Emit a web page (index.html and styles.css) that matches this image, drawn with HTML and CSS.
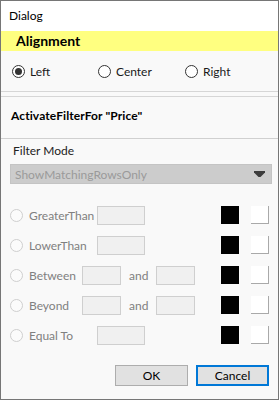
FILE: index.html
```html
<!DOCTYPE html>
<html lang="en">
<head>
    <meta charset="UTF-8">
    <title>Dialog</title>
    <link rel="stylesheet" href="styles.css">
</head>
<body>
    <div class="dialog">
        <div class="titlebar">Dialog</div>

        <div class="group-header">Alignment</div>
        <div class="align-row">
            <label class="align-opt opt-left"><span class="radio checked"></span>Left</label>
            <label class="align-opt opt-center"><span class="radio"></span>Center</label>
            <label class="align-opt"><span class="radio"></span>Right</label>
        </div>
        <div class="double-sep"></div>

        <div class="section-title">ActivateFilterFor "Price"</div>

        <div class="filter-body">
            <div class="field-label">Filter Mode</div>
            <div class="select">
                <span>ShowMatchingRowsOnly</span>
                <svg class="arrow" width="11" height="6" viewBox="0 0 11 6">
                    <path d="M0 0H11V1.5L6.5 6H4.5L0 1.5Z" fill="#3c3c3c"/>
                </svg>
            </div>

            <div class="rows">
                <div class="row">
                    <span class="radio off"></span>
                    <span class="row-label wide">GreaterThan</span>
                    <span class="box long"></span>
                    <span class="swatch black"></span>
                    <span class="swatch white"></span>
                </div>
                <div class="row">
                    <span class="radio off"></span>
                    <span class="row-label wide">LowerThan</span>
                    <span class="box long"></span>
                    <span class="swatch black"></span>
                    <span class="swatch white"></span>
                </div>
                <div class="row">
                    <span class="radio off"></span>
                    <span class="row-label">Between</span>
                    <span class="box"></span>
                    <span class="and">and</span>
                    <span class="box"></span>
                    <span class="swatch black"></span>
                    <span class="swatch white"></span>
                </div>
                <div class="row">
                    <span class="radio off"></span>
                    <span class="row-label">Beyond</span>
                    <span class="box"></span>
                    <span class="and">and</span>
                    <span class="box"></span>
                    <span class="swatch black"></span>
                    <span class="swatch white"></span>
                </div>
                <div class="row">
                    <span class="radio off"></span>
                    <span class="row-label wide">Equal To</span>
                    <span class="box long"></span>
                    <span class="swatch black"></span>
                    <span class="swatch white"></span>
                </div>
            </div>

            <div class="buttons">
                <button class="btn">OK</button>
                <button class="btn default">Cancel</button>
            </div>
        </div>
    </div>
</body>
</html>
```

FILE: styles.css
```css
body {
    margin: 0;
    font-family: Lato, "Liberation Sans", sans-serif;
    font-size: 12px;
    color: #000;
}
.dialog {
    width: 279px;
    height: 400px;
    box-sizing: border-box;
    border: 1px solid #767676;
    background-color: #f9f9f9;
    display: flex;
    flex-direction: column;
}
.titlebar {
    height: 30px;
    line-height: 29px;
    padding-left: 8px;
    background-color: white;
}
.group-header {
    height: 20px;
    line-height: 20px;
    padding-left: 15px;
    background-color: #ffff80;
    font-weight: bold;
    font-size: 14px;
}
.align-row {
    height: 40px;
    padding-left: 11px;
    display: flex;
    align-items: center;
}
.align-opt {
    display: flex;
    align-items: center;
    color: #1a1a1a;
}
.opt-left {
    width: 86px;
}
.opt-center {
    width: 87px;
}
.radio {
    width: 13px;
    height: 13px;
    box-sizing: border-box;
    border: 1px solid #333;
    border-radius: 50%;
    background: white;
    margin-right: 5px;
    position: relative;
    flex: none;
}
.radio.checked::after {
    content: "";
    position: absolute;
    left: 2px;
    top: 2px;
    width: 7px;
    height: 7px;
    border-radius: 50%;
    background: #333;
}
.radio.off {
    border-color: #cfcfcf;
    background: #fbfbfb;
}
.double-sep {
    height: 4px;
    border-top: 1px solid #d6d6d6;
    border-bottom: 1px solid #d6d6d6;
}
.section-title {
    height: 41px;
    line-height: 38px;
    padding-left: 10px;
    font-weight: bold;
    letter-spacing: 0.1px;
    border-bottom: 1px solid #d0d0d0;
}
.filter-body {
    flex: 1;
    padding: 0 9px 0 9px;
    display: flex;
    flex-direction: column;
}
.field-label {
    margin-top: 2px;
    height: 20px;
    line-height: 20px;
    padding-left: 3px;
    color: #222;
}
.select {
    margin-top: 3px;
    margin-right: -3px;
    height: 20px;
    box-sizing: border-box;
    border: 1px solid #c4c4c4;
    background-color: #cccccc;
    color: #9a9a9a;
    padding: 0 6px 0 4px;
    display: flex;
    align-items: center;
    justify-content: space-between;
}
.rows {
    margin-top: 16px;
}
.row {
    height: 30px;
    display: flex;
    align-items: center;
    color: #808080;
}
.row .radio {
    margin-right: 6px;
}
.row-label {
    width: 53px;
}
.row-label.wide {
    width: 68px;
}
.box {
    width: 39px;
    height: 19px;
    box-sizing: border-box;
    border: 1px solid #cfcfcf;
    background-color: #f0f0f0;
}
.box.long {
    width: 48px;
}
.and {
    width: 35px;
    padding-left: 8px;
    box-sizing: border-box;
}
.swatch {
    width: 18px;
    height: 18px;
    box-sizing: border-box;
}
.swatch.black {
    background: black;
    margin-left: auto;
}
.swatch.white {
    background: white;
    border-right: 1px solid #a9a9a9;
    border-bottom: 1px solid #a9a9a9;
    margin-left: 12px;
}
.buttons {
    margin-top: 15px;
    display: flex;
    justify-content: flex-end;
    gap: 8px;
}
.btn {
    width: 73px;
    height: 21px;
    box-sizing: border-box;
    border: 1px solid #adadad;
    background-color: #e1e1e1;
    font-family: inherit;
    font-size: 12px;
    padding: 0;
}
.btn.default {
    border: 2px solid #0078d7;
}
```
